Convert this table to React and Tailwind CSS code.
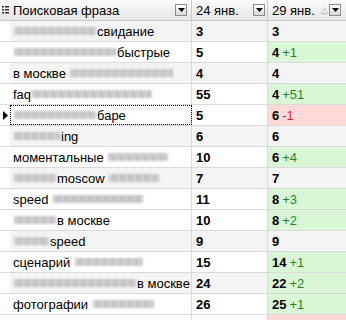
import React from "react";

const ROWS = [
  { a: [["b", 84], ["t", "свидание"]], c2: 3, c3: 3, d: 0 },
  { a: [["b", 104], ["t", "быстрые"]], c2: 5, c3: 4, d: 1 },
  { a: [["t", "в москве "], ["b", 105]], c2: 4, c3: 4, d: 0 },
  { a: [["t", "faq"], ["b", 122]], c2: 55, c3: 4, d: 51 },
  { a: [["b", 84], ["t", "баре"]], c2: 5, c3: 6, d: -1, focus: true },
  { a: [["b", 48], ["t", "ing"]], c2: 6, c3: 6, d: 0 },
  { a: [["t", "моментальные "], ["b", 62]], c2: 10, c3: 6, d: 4 },
  { a: [["b", 44], ["t", "moscow "], ["b", 52]], c2: 7, c3: 7, d: 0 },
  { a: [["t", "speed "], ["b", 92]], c2: 11, c3: 8, d: 3 },
  { a: [["b", 44], ["t", "в москве"]], c2: 10, c3: 8, d: 2 },
  { a: [["b", 37], ["t", "speed"]], c2: 9, c3: 9, d: 0 },
  { a: [["t", "сценарий "], ["b", 70]], c2: 15, c3: 14, d: 1 },
  { a: [["b", 124], ["t", "в москве"]], c2: 24, c3: 22, d: 2 },
  { a: [["t", "фотографии "], ["b", 63]], c2: 26, c3: 25, d: 1 },
  { a: [], c2: "", c3: "", d: -9 },
];

const GRAY_ROWS = [0, 2, 5, 7, 10, 12];

function DropBtn() {
  return (
    <span className="flex h-[12px] w-[12px] items-center justify-center border border-[#8c8c8c] bg-gradient-to-b from-[#ffffff] to-[#d8d8d8]">
      <svg width="7" height="4" viewBox="0 0 7 4">
        <path d="M0 0h7L3.5 4z" fill="#000" />
      </svg>
    </span>
  );
}

// blurred-out part of a phrase: a smudge, no readable text
function Smudge({ w }) {
  return (
    <span className="flex items-center px-[1px]" style={{ width: w }}>
      <span className="h-[8px] w-full bg-[repeating-linear-gradient(90deg,#c0c0c0_0px,#d8d8d8_3px,#b4b4b4_5px,#dedede_8px)] blur-[1.3px]" />
    </span>
  );
}

function Phrase({ parts }) {
  return (
    <span className="flex items-center whitespace-nowrap">
      {parts.map(([kind, v], i) =>
        kind === "t" ? (
          <span key={i} className="whitespace-pre text-black">
            {v}
          </span>
        ) : (
          <Smudge key={i} w={v} />
        )
      )}
    </span>
  );
}

export default function App() {
  return (
    <div
      className="h-[320px] w-[346px] overflow-hidden bg-white text-[13px] leading-none"
      style={{ fontFamily: '"Liberation Sans", Arial, sans-serif' }}
    >
      {/* header */}
      <div className="flex h-[21px] border-b border-[#c8c8c8] bg-gradient-to-b from-[#fbfbfb] to-[#e6e6e6]">
        <div className="flex w-[10px] shrink-0 items-center justify-center">
          <svg width="7" height="8" viewBox="0 0 7 8">
            <rect x="0" y="0" width="2" height="1.5" fill="#333" />
            <rect x="3" y="0" width="4" height="1.5" fill="#333" />
            <rect x="0" y="3" width="2" height="1.5" fill="#333" />
            <rect x="3" y="3" width="4" height="1.5" fill="#333" />
            <rect x="0" y="6" width="2" height="1.5" fill="#333" />
            <rect x="3" y="6" width="4" height="1.5" fill="#333" />
          </svg>
        </div>
        <div className="flex w-[182px] shrink-0 items-center justify-between border-r border-[#c8c8c8] pl-[3px] pr-[4px]">
          <span>Поисковая фраза</span>
          <DropBtn />
        </div>
        <div className="flex w-[76px] shrink-0 items-center justify-between border-r border-[#c8c8c8] pl-[4px] pr-[2px]">
          <span>24 янв.</span>
          <DropBtn />
        </div>
        <div className="flex flex-1 items-center justify-between pl-[4px] pr-[5px]">
          <span className="flex items-center gap-[6px]">
            <span>29 янв.</span>
            <span className="text-[9px] text-[#aaa]">△</span>
          </span>
          <DropBtn />
        </div>
      </div>

      {ROWS.map((r, i) => {
        const gray = GRAY_ROWS.includes(i);
        const base = gray ? "bg-[#f4f4f4]" : "bg-white";
        const c3bg = r.d > 0 ? "bg-[#d9f7d6]" : r.d < 0 ? "bg-[#ffd8d8]" : base;
        return (
          <div key={i} className="flex h-[21px] border-b border-[#dadada]">
            <div className="flex w-[10px] shrink-0 items-center justify-center bg-white">
              {r.focus ? (
                <svg width="5" height="9" viewBox="0 0 5 9">
                  <path d="M0 0l5 4.5L0 9z" fill="#000" />
                </svg>
              ) : null}
            </div>
            <div
              className={`flex w-[182px] shrink-0 items-center overflow-hidden border-r border-[#dadada] pl-[3px] ${base} ${
                r.focus ? "outline-1 -outline-offset-1 outline-dotted outline-black" : ""
              }`}
            >
              <Phrase parts={r.a} />
            </div>
            <div className={`flex w-[76px] shrink-0 items-center border-r border-[#dadada] pl-[4px] font-bold ${base}`}>
              {r.c2}
            </div>
            <div className={`flex flex-1 items-center gap-[3px] pl-[4px] ${c3bg}`}>
              <span className="font-bold">{r.c3}</span>
              {r.d > 0 ? <span className="text-[#1f8a1f]">+{r.d}</span> : null}
              {r.d < 0 && r.d > -9 ? <span className="text-[#e02020]">{r.d}</span> : null}
            </div>
          </div>
        );
      })}
    </div>
  );
}
